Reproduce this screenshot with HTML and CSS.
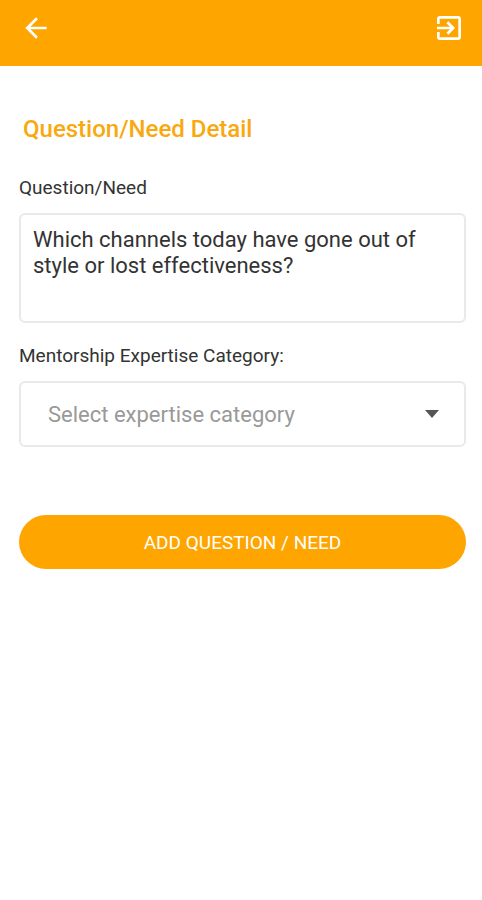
FILE: index.html
```html
<!DOCTYPE html>
<html lang="en">
<head>
<meta charset="utf-8">
<meta name="viewport" content="width=device-width, initial-scale=1">
<title>Question/Need Detail</title>
<link rel="stylesheet" href="styles.css">
</head>
<body>
<header class="app-bar">
  <button class="icon-button" type="button" aria-label="Back">
    <svg class="icon" viewBox="0 0 24 24" aria-hidden="true"><path d="M20 11H7.83l5.59-5.59L12 4l-8 8 8 8 1.41-1.41L7.83 13H20v-2z"/></svg>
  </button>
  <button class="icon-button" type="button" aria-label="Log out">
    <svg class="icon" viewBox="0 0 24 24" aria-hidden="true"><path d="M10.09 15.59L11.5 17l5-5-5-5-1.41 1.41L12.67 11H3v2h9.67l-2.58 2.59zM19 3H5c-1.11 0-2 .9-2 2v4h2V5h14v14H5v-4H3v4c0 1.1.89 2 2 2h14c1.1 0 2-.9 2-2V5c0-1.1-.9-2-2-2z"/></svg>
  </button>
</header>
<main class="content">
  <h1 class="title">Question/Need Detail</h1>
  <form class="form">
    <label class="label" for="question">Question/Need</label>
    <textarea class="field question" id="question">Which channels today have gone out of style or lost effectiveness?</textarea>
    <label class="label" for="category">Mentorship Expertise Category:</label>
    <div class="select-wrap">
      <select class="field category" id="category">
        <option>Select expertise category</option>
      </select>
      <svg class="caret" viewBox="0 0 14 8" aria-hidden="true"><path d="M0 0h14L7 8z"/></svg>
    </div>
    <button class="submit" type="button">ADD QUESTION / NEED</button>
  </form>
</main>
</body>
</html>
```
FILE: styles.css
```css
* { box-sizing: border-box; }
body {
  margin: 0;
  background: #fff;
  color: #333;
  font-family: Roboto, "Liberation Sans", sans-serif;
}
.app-bar {
  display: flex;
  justify-content: space-between;
  height: 66px;
  padding: 12px 15px 12px 18px;
  background: #ffa500;
}
.icon-button {
  display: flex;
  align-items: center;
  justify-content: center;
  width: 36px;
  height: 32px;
  padding: 0;
  border: 0;
  background: none;
}
.icon { flex: none; width: 32px; height: 32px; fill: #fff; }
.content { padding: 49px 16px 24px 19px; }
.title {
  margin: 0 4px 32px;
  color: #f9a80f;
  font-size: 24px;
  font-weight: 500;
  line-height: 28px;
}
.form { display: flex; flex-direction: column; }
.label { margin-bottom: 12px; font-size: 19px; line-height: 26px; }
.field {
  display: block;
  width: 100%;
  border: 2px solid #e9e9e9;
  border-radius: 6px;
  background: #fff;
  font: inherit;
  font-size: 22px;
  outline: 0;
}
.question {
  height: 110px;
  margin-bottom: 20px;
  padding: 12px;
  color: #333;
  line-height: 26px;
  resize: none;
}
.select-wrap { position: relative; margin-bottom: 68px; }
.category {
  height: 66px;
  padding: 0 48px 0 27px;
  color: #999;
  appearance: none;
}
.caret {
  position: absolute;
  top: 29px;
  right: 27px;
  width: 14px;
  height: 8px;
  fill: #555;
  pointer-events: none;
}
.submit {
  height: 54px;
  border: 0;
  border-radius: 27px;
  background: #ffa500;
  color: #fff;
  font: inherit;
  font-size: 19px;
}
```
